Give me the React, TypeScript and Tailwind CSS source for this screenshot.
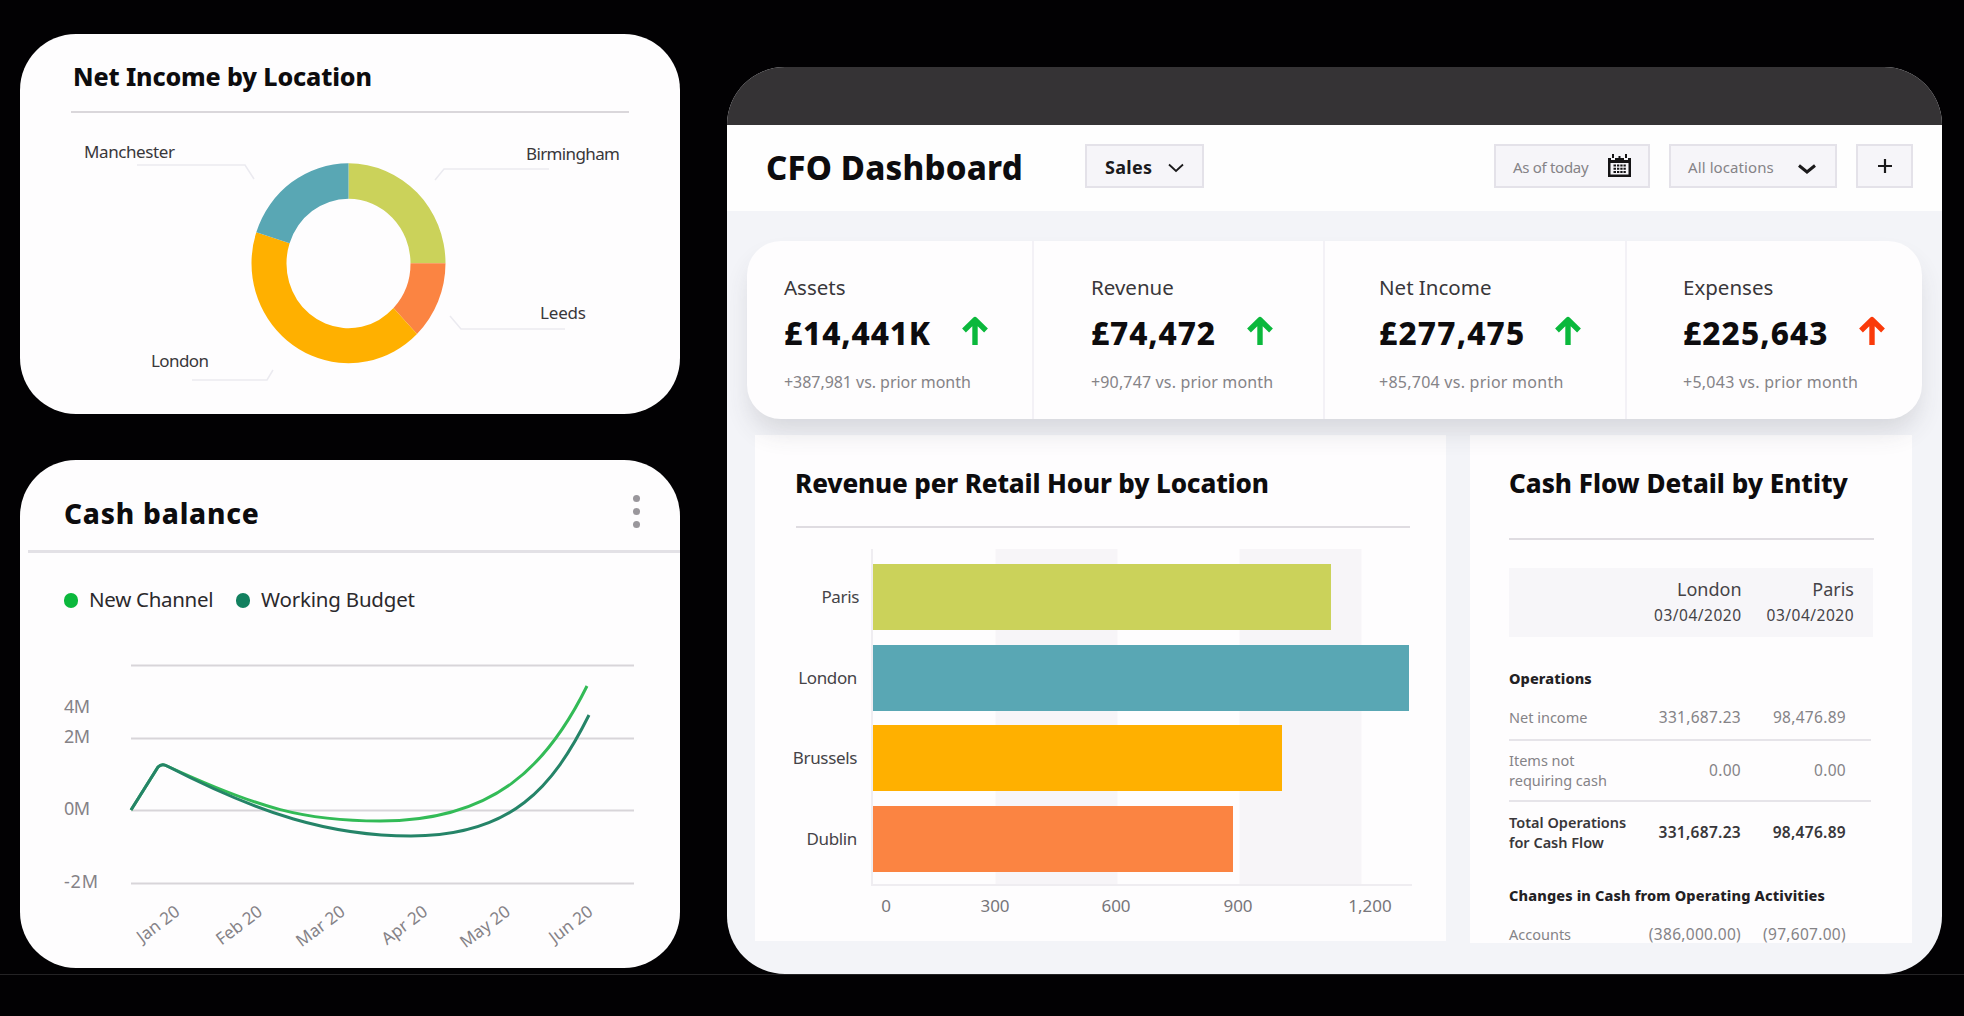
import type { ReactNode } from 'react'

const kpis = [
  { label: 'Assets', value: '£14,441K', note: '+387,981 vs. prior month', up: 'text-[#0bb83c]', cell: 'w-[287px] pl-[37px]', row: 'w-[204px]', num: 'tracking-[0.9px]', sub: 'tracking-[-0.05px]' },
  { label: 'Revenue', value: '£74,472', note: '+90,747 vs. prior month', up: 'text-[#0bb83c]', cell: 'w-[291px] pl-[57px]', row: 'w-[182px]', num: 'tracking-[0.9px]', sub: 'tracking-[0.15px]' },
  { label: 'Net Income', value: '£277,475', note: '+85,704 vs. prior month', up: 'text-[#0bb83c]', cell: 'w-[302px] pl-[54px]', row: 'w-[202px]', num: 'tracking-[1.2px]', sub: 'tracking-[0.25px]' },
  { label: 'Expenses', value: '£225,643', note: '+5,043 vs. prior month', up: 'text-[#fa3a0a]', cell: 'w-[295px] pl-[56px]', row: 'w-[202px]', num: 'tracking-[1.1px]', sub: 'tracking-[0.25px]' },
]

const gridLines = [
  { label: '', y: 115 },
  { label: '2M', y: 188 },
  { label: '0M', y: 260 },
  { label: '-2M', y: 333 },
]

const months = ['Jan 20', 'Feb 20', 'Mar 20', 'Apr 20', 'May 20', 'Jun 20']

const bars = [
  { city: 'Paris', y: 37, width: 458, fill: '#cbd25a', labelEnd: 104 },
  { city: 'London', y: 118, width: 536, fill: '#59a7b4', labelEnd: 102 },
  { city: 'Brussels', y: 198, width: 409, fill: '#ffb000', labelEnd: 102 },
  { city: 'Dublin', y: 279, width: 360, fill: '#fb8442', labelEnd: 102 },
]

const ticks = [
  { label: '0', x: 131 },
  { label: '300', x: 240 },
  { label: '600', x: 361 },
  { label: '900', x: 483 },
  { label: '1,200', x: 615 },
]

function Card({ className, children }: { className: string; children: ReactNode }) {
  return <section className={`overflow-hidden rounded-[56px] bg-[#fefdfe] ${className}`}>{children}</section>
}

function ArrowUp({ className }: { className: string }) {
  return (
    <svg className={className} width="26" height="30" viewBox="0 0 26 30" fill="none" stroke="currentColor" strokeWidth="5.4">
      <path d="M13 29V4M2 14.5 13 3.7l11 10.8" strokeLinejoin="round" />
    </svg>
  )
}

function Chevron({ width, stroke }: { width: number; stroke: number }) {
  return (
    <svg width={width} height="10" viewBox={`0 0 ${width} 10`} fill="none" stroke="#1b1a1c" strokeWidth={stroke}>
      <path d={`M1 1.5 ${width / 2} 8 ${width - 1} 1.5`} />
    </svg>
  )
}

function CalendarIcon() {
  return (
    <svg width="23" height="24" viewBox="0 0 23 24" fill="#151416">
      <path fillRule="evenodd" d="M0 4h3v2h4V4h9v2h4V4h3v19H0zM2.5 9v11.5h18V9z" />
      <path d="M4 0h2v4H4zM17 0h2v4h-2zM10.500 2h2v3h-2z" />
      <path d="M5.5 10.500H8v2H5.500zM9 10.500h2.300v2H9zM12.300 10.500h2.300v2h-2.300zM15.500 10.500h2.300v2h-2.300zM5.500 13.700H8v2H5.500zM9 13.700h2.300v2H9zM12.300 13.700h2.300v2h-2.300zM15.500 13.700h2.300v2h-2.300zM5.500 16.900H8v2H5.500zM9 16.900h2.300v2H9zM12.300 16.900h2.300v2h-2.300zM15.500 16.900h2.300v2h-2.300z" />
    </svg>
  )
}

function NetIncomeCard() {
  return (
    <Card className="h-[380px]">
      <h2 className="pt-[25px] pl-[53px] text-[25px] leading-[34px] font-extrabold tracking-[-0.13px] text-[#0d0c0e]">Net Income by Location</h2>
      <div className="mt-[18px] ml-[51px] h-[2px] w-[558px] bg-[#dad7db]" />
      <svg width="660" height="300" viewBox="0 79 660 300" className="block text-[17px]" fill="#39373a">
        <path d="M328.5 129.3A97 100 0 0 1 425.5 229.3H390.5A62 64.5 0 0 0 328.5 164.8Z" fill="#cbd25a" />
        <path d="M425.5 229.3A97 100 0 0 1 397 300L373.5 274.1A62 64.5 0 0 0 390.5 229.3Z" fill="#fb8442" />
        <path d="M397 300A97 100 0 0 1 231.5 229.3A97 100 0 0 1 236.3 198.3L269.600 209.300A62 64.500 0 0 0 266.500 229.300A62 64.500 0 0 0 373.500 274.100Z" fill="#ffb000" />
        <path d="M236.3 198.3A97 100 0 0 1 328.5 129.3V164.8A62 64.5 0 0 0 269.6 209.3Z" fill="#59a7b4" />
        <g fill="none" stroke="#ebeaf0" strokeWidth="1.5">
          <path d="M117 131H225L234 145" />
          <path d="M415 146 424 135H529" />
          <path d="M430 282 441 295H545" />
          <path d="M172 346H247L253 336" />
        </g>
        <text x="64" y="124" textLength="91">Manchester</text>
        <text x="506" y="126" textLength="94">Birmingham</text>
        <text x="520" y="285" textLength="46">Leeds</text>
        <text x="131" y="333" textLength="58">London</text>
      </svg>
    </Card>
  )
}

function CashBalanceCard() {
  return (
    <Card className="h-[508px]">
      <div className="flex h-[90px] items-start justify-between pr-[40px] pl-[44px]">
        <h2 className="pt-[34px] text-[28px] leading-[38px] font-extrabold tracking-[0.8px] text-[#0d0c0e]">Cash balance</h2>
        <div className="flex flex-col gap-[6px] pt-[35px]">
          <span className="h-[7px] w-[7px] rounded-full bg-[#9a979c]" />
          <span className="h-[7px] w-[7px] rounded-full bg-[#9a979c]" />
          <span className="h-[7px] w-[7px] rounded-full bg-[#9a979c]" />
        </div>
      </div>
      <div className="ml-2 h-[3px] bg-[#e3e1e6]" />
      <div className="flex h-[94px] items-start pt-[32px] pl-[44px] text-[20.5px] leading-7 text-[#2b292c]">
        <span className="mt-[8px] mr-[11px] h-[15px] w-[14px] rounded-full bg-[#0bb83c]" />
        <span className="w-[154px] tracking-[-0.3px]">New Channel</span>
        <span className="mt-[8px] -ml-[7px] mr-[11px] h-[15px] w-[14px] rounded-full bg-[#12805f]" />
        <span className="tracking-[-0.2px]">Working Budget</span>
      </div>
      <svg width="660" height="321" viewBox="0 97 660 321" className="block text-[18px]" fill="#858287">
        {gridLines.map((line) => (
          <g key={line.y}>
            <path d={`M111 ${line.y + 0.5}H614`} stroke="#d8d5d9" strokeWidth="2" />
            {line.label && <text x="44" y={line.y + 5} textLength={line.label === '-2M' ? 34 : 26}>{line.label}</text>}
          </g>
        ))}
        <text x="44" y="163" textLength="26">4M</text>
        {months.map((month, i) => (
          <text key={month} textAnchor="end" transform={`translate(${161 + i * 82.6} 364) rotate(-37)`} fontSize="17">
            {month}
          </text>
        ))}
        <g fill="none" strokeWidth="3" strokeLinejoin="round">
          <path d="M111 260 138 217Q142 213 147 216C240 259 285 271 360 271C475 271 528 215 567 136" stroke="#33bb57" />
          <path d="M111 260 138 217Q142 213 147 216C240 264 310 286 391 286C492 286 533 237 569 165" stroke="#258468" />
        </g>
      </svg>
    </Card>
  )
}

function Toolbar() {
  return (
    <header className="flex h-[86px] items-start bg-[#fefefe] pt-[19px] pl-[39px]">
      <h1 className="w-[319px] pt-px text-[33px] leading-[46px] font-extrabold tracking-[0.2px] text-[#0d0c0e]">CFO Dashboard</h1>
      <button className="flex h-[44px] w-[119px] items-center justify-between border-2 border-[#e4e2e9] bg-[#f6f5f9] px-[18px] text-[18px] font-bold tracking-[0.3px] text-[#1b1a1c]">
        <span className="pt-[2px]">Sales</span>
        <span className="pt-[3px]"><Chevron width={16} stroke={1.8} /></span>
      </button>
      <button className="ml-[290px] flex h-[44px] w-[156px] items-center justify-between border-2 border-[#e4e2e9] bg-[#f6f5f9] px-[17px] text-[15px] tracking-[-0.3px] text-[#858387]">
        <span className="pt-[2px]">As of today</span>
        <CalendarIcon />
      </button>
      <button className="ml-[19px] flex h-[44px] w-[168px] items-center justify-between border-2 border-[#e4e2e9] bg-[#f6f5f9] pr-[19px] pl-[17px] text-[15px] tracking-[0.1px] text-[#858387]">
        <span className="pt-[2px]">All locations</span>
        <span className="pt-[5px]"><Chevron width={18} stroke={3} /></span>
      </button>
      <button className="ml-[19px] flex h-[44px] w-[57px] items-center justify-center border-2 border-[#e4e2e9] bg-[#f6f5f9]">
        <svg width="14" height="14" viewBox="0 0 14 14" stroke="#1b1a1c" strokeWidth="2.2">
          <path d="M7 0v14M0 7h14" />
        </svg>
      </button>
    </header>
  )
}

function KpiStrip() {
  return (
    <div className="relative z-10 mt-[30px] ml-[20px] flex h-[178px] w-[1175px] divide-x-2 divide-[#f3f1f6] rounded-[34px] bg-[#fefdfe] shadow-[0_16px_26px_-4px_rgba(60,60,75,0.16)]">
      {kpis.map((kpi) => (
        <div key={kpi.label} className={`pt-[32px] ${kpi.cell}`}>
          <div className="text-[20.5px] leading-7 text-[#39373a]">{kpi.label}</div>
          <div className={`flex h-[60px] items-center justify-between ${kpi.row}`}>
            <span className={`pt-[3px] text-[31.5px] leading-[44px] font-extrabold text-[#0d0c0e] ${kpi.num}`}>{kpi.value}</span>
            <ArrowUp className={kpi.up} />
          </div>
          <div className={`mt-[9px] text-[16px] leading-6 text-[#858387] ${kpi.sub}`}>{kpi.note}</div>
        </div>
      ))}
    </div>
  )
}

function RevenuePanel() {
  return (
    <section className="h-[506px] w-[691px] bg-[#fefdfe] pt-[30px]">
      <h2 className="pl-[40px] text-[26px] leading-[36px] font-extrabold tracking-[-0.15px] text-[#0d0c0e]">Revenue per Retail Hour by Location</h2>
      <div className="mt-[25px] ml-[41px] h-[2px] w-[614px] bg-[#dfdce1]" />
      <svg width="690" height="400" viewBox="0 1 690 400" className="block text-[17px]" fill="#454347">
        <path d="M240.5 22h122v336h-122zM484.5 22h122v336h-122z" fill="#f7f5f8" />
        <path d="M117 22V358H657" fill="none" stroke="#efedf1" strokeWidth="2" />
        {bars.map((bar) => (
          <g key={bar.city}>
            <rect x="118" y={bar.y} width={bar.width} height="66" fill={bar.fill} />
            <text x={bar.labelEnd} y={bar.y + 39} textAnchor="end" letterSpacing="-0.35">{bar.city}</text>
          </g>
        ))}
        {ticks.map((tick) => (
          <text key={tick.label} x={tick.x} y="385" textAnchor="middle" fill="#77757a">{tick.label}</text>
        ))}
      </svg>
    </section>
  )
}

function Row({ label, london, paris, className }: { label: ReactNode; london: string; paris: string; className: string }) {
  return (
    <div className={`grid grid-cols-[130px_102px_105px] items-center text-[14.5px] leading-[19.5px] ${className}`}>
      <span>{label}</span>
      <span className="text-right text-[15.5px] tracking-[0.3px]">{london}</span>
      <span className="text-right text-[15.5px] tracking-[0.3px]">{paris}</span>
    </div>
  )
}

function CashFlowPanel() {
  return (
    <section className="h-[508px] w-[442px] bg-[#fefdfe] pt-[30px] pl-[39px]">
      <h2 className="text-[26px] leading-[36px] font-extrabold whitespace-nowrap text-[#0d0c0e]">Cash Flow Detail by Entity</h2>
      <div className="mt-[37px] h-[2px] w-[365px] bg-[#dfdce1]" />
      <div className="mt-[28px] flex h-[69px] w-[364px] justify-end gap-[25px] bg-[#f7f6f9] pt-[8px] pr-[19px] text-right text-[#454347]">
        <div>
          <div className="text-[18px] leading-[26px]">London</div>
          <div className="text-[15.5px] leading-[27px] tracking-[0.5px]">03/04/2020</div>
        </div>
        <div>
          <div className="text-[18px] leading-[26px]">Paris</div>
          <div className="text-[15.5px] leading-[27px] tracking-[0.5px]">03/04/2020</div>
        </div>
      </div>
      <h3 className="mt-[31px] text-[14.5px] leading-5 font-extrabold tracking-[0.1px] text-[#232124]">Operations</h3>
      <Row className="mt-[9px] h-[42px] w-[362px] text-[#858387]" label="Net income" london="331,687.23" paris="98,476.89" />
      <div className="h-[2px] w-[362px] bg-[#e6e4e9]" />
      <Row className="h-[59px] w-[362px] text-[#858387]" label={<>Items not<br />requiring cash</>} london="0.00" paris="0.00" />
      <div className="h-[2px] w-[362px] bg-[#e6e4e9]" />
      <Row className="h-[61px] w-[362px] font-semibold text-[#39373a]" label={<>Total Operations<br />for Cash Flow</>} london="331,687.23" paris="98,476.89" />
      <h3 className="mt-[22px] text-[14.5px] leading-5 font-extrabold tracking-[0.15px] whitespace-nowrap text-[#232124]">Changes in Cash from Operating Activities</h3>
      <Row className="mt-[11px] h-[38px] w-[362px] text-[#858387]" label="Accounts" london="(386,000.00)" paris="(97,607.00)" />
    </section>
  )
}

export default function App() {
  return (
    <div className="flex h-[1016px] w-[1964px] flex-col overflow-hidden bg-[#020103] font-['Noto_Sans',sans-serif]">
      <div className="flex h-[974px]">
        <div className="ml-5 flex w-[660px] flex-col gap-[46px] pt-[34px]">
          <NetIncomeCard />
          <CashBalanceCard />
        </div>
        <main className="mt-[67px] ml-[47px] h-[907px] w-[1215px] overflow-hidden rounded-[58px] bg-[#f3f4f8]">
          <div className="h-[58px] bg-[#353335]" />
          <Toolbar />
          <KpiStrip />
          <div className="mt-[16px] ml-[28px] flex items-start gap-[24px]">
            <RevenuePanel />
            <CashFlowPanel />
          </div>
        </main>
      </div>
      <div className="h-px bg-[#242325]" />
    </div>
  )
}
